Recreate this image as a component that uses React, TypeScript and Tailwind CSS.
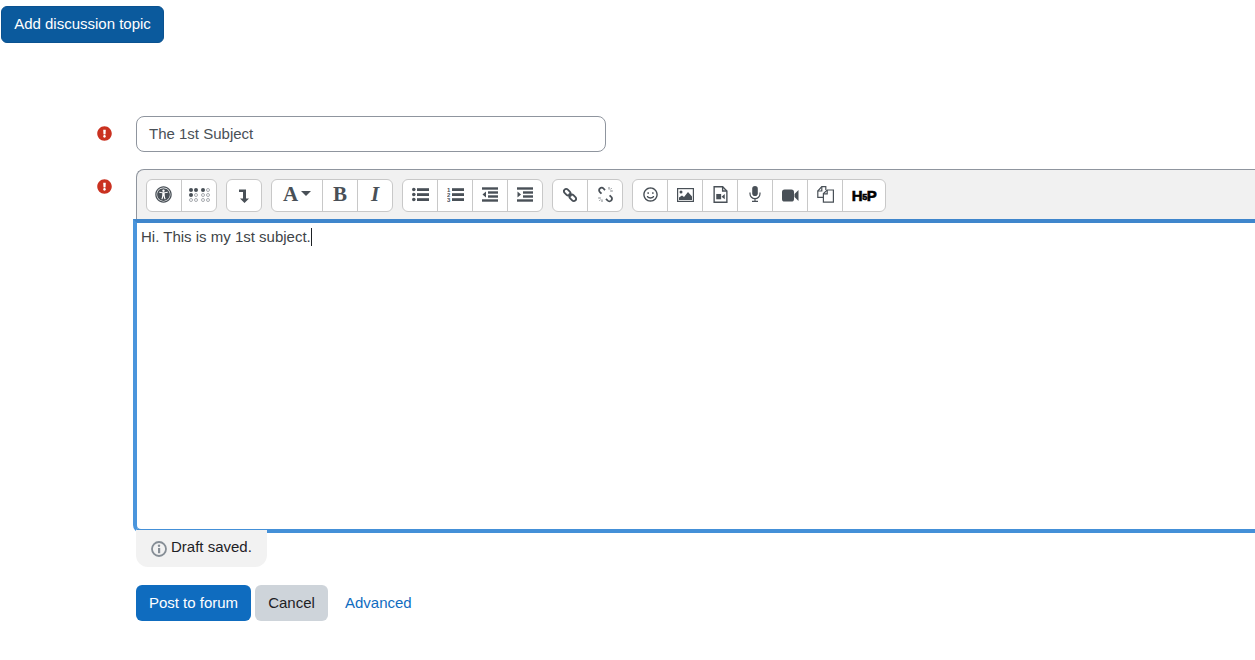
import { ReactNode } from "react";
import { FaUniversalAccess, FaRegSmile, FaExclamationCircle } from "react-icons/fa";

function ToolButton({ children, wide = "w-[35px] first:w-[34px]" }: { children: ReactNode; wide?: string }) {
  return (
    <div className={`${wide} h-full flex items-center justify-center border-l border-[#c8c8c8] first:border-l-0 text-[#495057]`}>
      {children}
    </div>
  );
}

function Group({ children }: { children: ReactNode }) {
  return <div className="flex h-[33px] bg-white border border-[#c8c8c8] rounded-[6px] overflow-hidden">{children}</div>;
}

function Lines({ kind }: { kind: "ul" | "ol" | "out" | "in" }) {
  return (
    <svg width="17" height="17" viewBox="0 0 17 17" fill="#495057">
      {kind === "ul" && (
        <>
          <circle cx="1.8" cy="3.5" r="1.8" />
          <circle cx="1.8" cy="8.5" r="1.8" />
          <circle cx="1.8" cy="13.5" r="1.8" />
          <rect x="5" y="2.2" width="12" height="2.8" />
          <rect x="5" y="7.2" width="12" height="2.8" />
          <rect x="5" y="12.2" width="12" height="2.8" />
        </>
      )}
      {kind === "ol" && (
        <>
          <rect x="5" y="2.2" width="12" height="2.8" />
          <rect x="5" y="7.2" width="12" height="2.8" />
          <rect x="5" y="12.2" width="12" height="2.8" />
          <text x="0" y="6" fontSize="6" fontWeight="700" fontFamily="Liberation Sans">1</text>
          <text x="0" y="11" fontSize="6" fontWeight="700" fontFamily="Liberation Sans">2</text>
          <text x="0" y="16" fontSize="6" fontWeight="700" fontFamily="Liberation Sans">3</text>
        </>
      )}
      {(kind === "out" || kind === "in") && (
        <>
          <rect x="0" y="1.3" width="16" height="2.4" />
          <rect x="6" y="5.3" width="10" height="2.4" />
          <rect x="6" y="9.3" width="10" height="2.4" />
          <rect x="0" y="13.3" width="16" height="2.4" />
          {kind === "out" ? <path d="M4 5.5v6L0.5 8.5z" /> : <path d="M0.5 5.5v6L4 8.5z" />}
        </>
      )}
    </svg>
  );
}

function Braille() {
  const on = [1, 1, 1, 0, 0, 0];
  const on2 = [1, 0, 0, 0, 0, 0];
  return (
    <div className="flex gap-[3px] -mt-[2px] ml-[1px]">
      {[on, on2].map((cells, g) => (
        <div key={g} className="grid grid-cols-2 gap-px">
          {cells.map((c, i) => (
            <span key={i} className={`w-[4px] h-[4px] rounded-full ${c ? "bg-[#495057]" : "border border-[#a8acb0]"}`} />
          ))}
        </div>
      ))}
    </div>
  );
}

function FileVideo() {
  return (
    <svg width="15" height="17" viewBox="0 0 14 16" fill="none" stroke="#495057" strokeWidth="1.3" className="-mt-[3px]">
      <path d="M1 .7h8l4 4v10.6H1z" />
      <path d="M9 .7v4h4" />
      <rect x="3" y="7.5" width="4.6" height="5" fill="#495057" stroke="none" />
      <path d="M8 10l3-2.5v5z" fill="#495057" stroke="none" />
    </svg>
  );
}

function Landscape() {
  return (
    <svg width="17" height="14" viewBox="0 0 17 14" className="-mt-[2px]">
      <rect x=".6" y=".6" width="15.8" height="12.8" fill="none" stroke="#495057" strokeWidth="1.2" />
      <circle cx="4" cy="4" r="1.5" fill="#495057" />
      <path d="M2 12V9.5l3-2 2 1.5 4-5 4 4.5V12z" fill="#495057" />
    </svg>
  );
}

function Turn() {
  return (
    <svg width="10" height="14" viewBox="0 0 10 14" fill="#495057">
      <path d="M0 .5h7v9h3l-4.5 4.5L1 9.5h3V3H0z" />
    </svg>
  );
}

function LinkIcon() {
  return (
    <svg width="14" height="14" viewBox="0 0 16 16" fill="none" stroke="#495057" strokeWidth="2.1" className="-mt-[2px]">
      <rect x="-4.2" y="-2.6" width="8.4" height="5.2" rx="2.6" transform="translate(4.8 4.8) rotate(45)" />
      <rect x="-4.2" y="-2.6" width="8.4" height="5.2" rx="2.6" transform="translate(11.2 11.2) rotate(45)" />
      <path d="M6.5 6.5l3 3" />
    </svg>
  );
}

function UnlinkIcon() {
  return (
    <svg width="17" height="17" viewBox="0 0 17 17" fill="none" stroke="#495057" strokeWidth="1.8" className="-mt-[2px]">
      <path d="M8 4.2L6.5 2.5a2.4 2.4 0 0 0-3.6 0 2.4 2.4 0 0 0 0 3.6l1.6 1.6" />
      <path d="M12.6 9.3l1.6 1.6a2.4 2.4 0 0 1 0 3.6 2.4 2.4 0 0 1-3.6 0L9 12.8" />
      <path d="M12 1v2.5M15.8 5h-2.6M14.6 2.2l-1.2 1.2M5 16v-2.5M1.2 12h2.6M2.4 14.8l1.2-1.2" strokeWidth=".7" />
    </svg>
  );
}

function Mic() {
  return (
    <svg width="12" height="16" viewBox="0 0 12 16" fill="none" stroke="#495057" strokeWidth="1.2" className="-mt-[3px]">
      <rect x="3.2" y="0" width="5.6" height="10" rx="2.8" fill="#495057" stroke="none" />
      <path d="M1 6.5v1.2a5 5 0 0 0 10 0V6.5M6 12.7V15.4M3 15.4h6" />
    </svg>
  );
}

function VideoCam() {
  return (
    <svg width="17" height="13" viewBox="0 0 17 13" fill="#495057" className="-mt-[1px]">
      <rect x="0" y="0.5" width="12" height="12" rx="2.6" />
      <path d="M12.5 5l4-4v11l-4-4z" />
    </svg>
  );
}

function CopyIcon() {
  return (
    <svg width="17" height="17" viewBox="0 0 17 17" fill="none" stroke="#495057" strokeWidth="1.2" className="-mt-[2px]">
      <path d="M6 11.4H.8V5l4-4.3h4V4" />
      <path d="M4.8.8V5H.8" />
      <path d="M6.4 16.2V7.6l3.8-3.6h6.2v12.2z" fill="#fff" />
      <path d="M10.2 4v3.8H6.4" />
    </svg>
  );
}

export default function App() {
  return (
    <div className="w-[1255px] h-[660px] overflow-hidden bg-white font-['Liberation_Sans',sans-serif] text-[15px] text-[#1d2125]">
      <div className="pt-[6px] pl-px">
        <button className="h-[37px] w-[163px] rounded-[6px] bg-[#0b5a9d] border border-[#0a5290] text-white text-[15px]">
          Add discussion topic
        </button>
      </div>

      <div className="mt-[73px] flex">
        <div className="w-[136px] flex justify-end pr-[24px] pt-[10px]">
          <FaExclamationCircle className="text-[#ca3120]" size={15} />
        </div>
        <div className="w-[470px] h-[36px] border border-[#8f959e] rounded-[8px] px-3 flex items-center text-[#495057]">
          The 1st Subject
        </div>
      </div>

      <div className="mt-[17px] flex">
        <div className="w-[136px] shrink-0 flex justify-end pr-[24px] pt-[10px]">
          <FaExclamationCircle className="text-[#ca3120]" size={15} />
        </div>
        <div className="w-[1200px] shrink-0">
          <div className="h-[50px] bg-[#f1f1f1] border-t border-l border-[#8f959e] rounded-tl-[8px] pl-[9px] pt-[9px] flex gap-[9px]">
            <Group>
              <ToolButton><FaUniversalAccess size={17} className="-mt-[2px] -ml-[1px]" /></ToolButton>
              <ToolButton><Braille /></ToolButton>
            </Group>
            <Group>
              <ToolButton><Turn /></ToolButton>
            </Group>
            <Group>
              <ToolButton wide="w-[50px]">
                <span className="-mt-[3px] font-['Liberation_Serif',serif] font-bold text-[21px] leading-none">A</span>
                <span className="ml-[3px] -mt-[4px] border-x-[5px] border-x-transparent border-t-[5px] border-t-[#495057]" />
              </ToolButton>
              <ToolButton><span className="-mt-[3px] font-['Liberation_Serif',serif] font-bold text-[21px] leading-none">B</span></ToolButton>
              <ToolButton><span className="-mt-[3px] font-['Liberation_Serif',serif] font-bold italic text-[21px] leading-none">I</span></ToolButton>
            </Group>
            <Group>
              <ToolButton><span className="-mt-[3px]"><Lines kind="ul" /></span></ToolButton>
              <ToolButton><span className="-mt-[3px]"><Lines kind="ol" /></span></ToolButton>
              <ToolButton><span className="-mt-[3px]"><Lines kind="out" /></span></ToolButton>
              <ToolButton><span className="-mt-[3px]"><Lines kind="in" /></span></ToolButton>
            </Group>
            <Group>
              <ToolButton><LinkIcon /></ToolButton>
              <ToolButton><UnlinkIcon /></ToolButton>
            </Group>
            <Group>
              <ToolButton><FaRegSmile size={15} className="-mt-[3px]" /></ToolButton>
              <ToolButton><Landscape /></ToolButton>
              <ToolButton><FileVideo /></ToolButton>
              <ToolButton><Mic /></ToolButton>
              <ToolButton><VideoCam /></ToolButton>
              <ToolButton><CopyIcon /></ToolButton>
              <ToolButton wide="w-[43px]">
                <span className="font-['Liberation_Sans',sans-serif] font-bold text-[15px] leading-none text-black tracking-[-0.5px] [-webkit-text-stroke:0.6px_black]">
                  H<span className="text-[9px] align-[1px]">5</span>P
                </span>
              </ToolButton>
            </Group>
          </div>
          <div className="relative -ml-[3px] h-[314px] border-4 border-t-[#3f86cc] border-l-[#4a95dc] border-r-[#3f86cc] border-b-[#4490d8] rounded-bl-[8px] bg-white pl-[4px] pt-[3px] text-[#404448] leading-[22px]">
            <span>Hi. This is my 1st subject.</span>
            <span className="inline-block w-px h-[18px] bg-[#1d2125] align-[-4px]" />
          </div>
          <div className="relative -mt-[3px] w-[131px] h-[37px] bg-[#f2f2f2] rounded-b-[12px] flex items-center pl-[15px]">
            <svg width="16" height="16" viewBox="0 0 16 16" className="mr-[4px] mt-[1px]">
              <circle cx="8" cy="8" r="7" fill="none" stroke="#868e96" strokeWidth="1.8" />
              <circle cx="8" cy="4.8" r="1.2" fill="#868e96" />
              <rect x="7" y="7" width="2.2" height="5.2" fill="#868e96" />
            </svg>
            <span className="-mt-[2px]">Draft saved.</span>
          </div>
          <div className="mt-[18px] flex items-center">
            <button className="w-[115px] h-[36px] rounded-[6px] bg-[#0f6cbf] text-white">Post to forum</button>
            <button className="ml-[4px] w-[73px] h-[36px] rounded-[6px] bg-[#ced4da] text-[#1d2125]">Cancel</button>
            <a className="ml-[17px] text-[#0f6cbf]">Advanced</a>
          </div>
        </div>
      </div>
    </div>
  );
}
